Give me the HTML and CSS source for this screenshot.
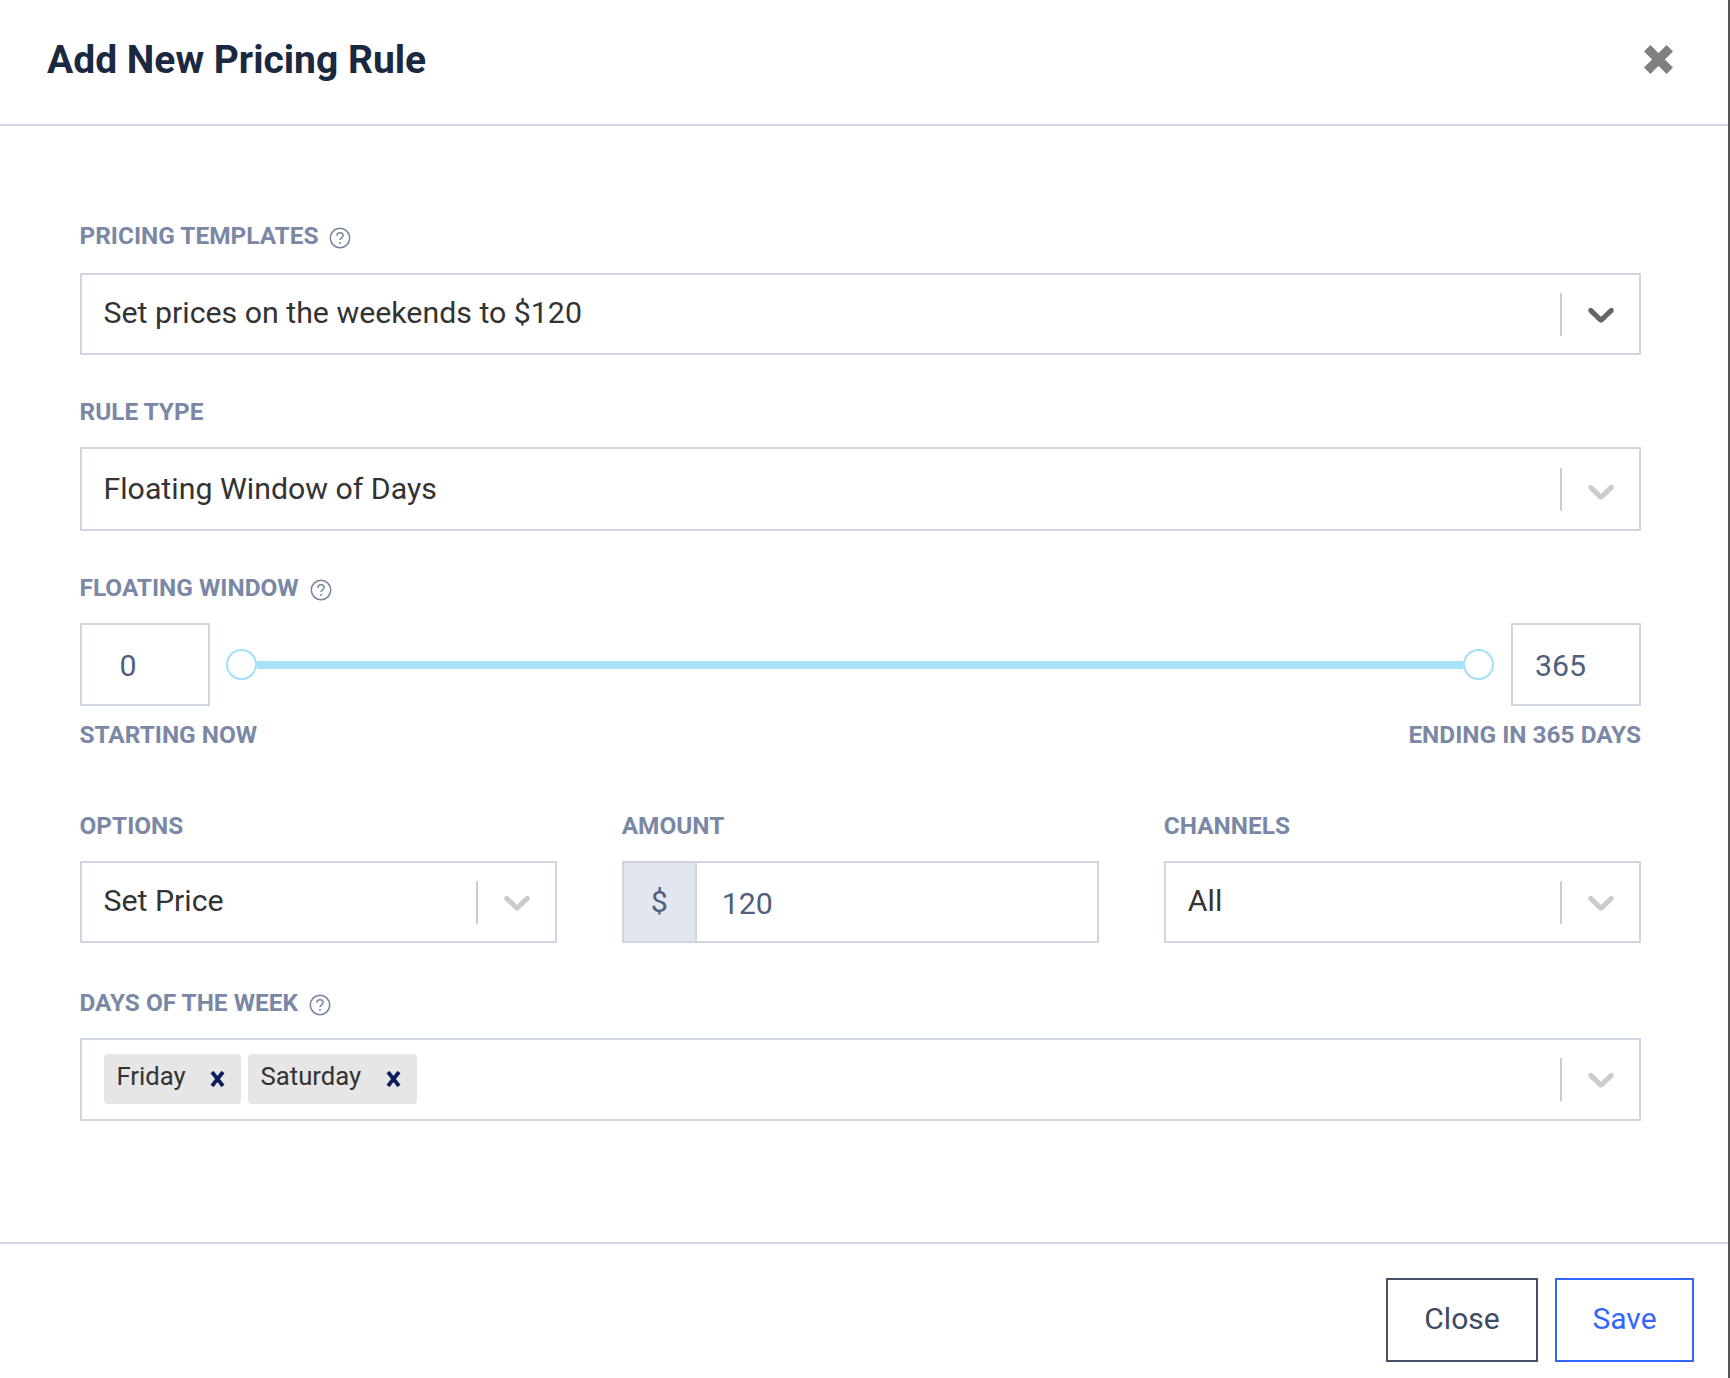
FILE: index.html
```html
<!DOCTYPE html>
<html>
<head>
    <title>Add New Pricing Rule</title>
    <link rel="stylesheet" href="styles.css">
</head>
<body>
    <svg class="defs" width="0" height="0">
        <symbol id="chevron" viewBox="0 0 20 20">
            <path d="M4.516 7.548c0.436-0.446 1.043-0.481 1.576 0l3.908 3.747 3.908-3.747c0.533-0.481 1.141-0.446 1.574 0 0.436 0.445 0.408 1.197 0 1.615-0.406 0.418-4.695 4.502-4.695 4.502-0.217 0.223-0.502 0.335-0.787 0.335s-0.57-0.112-0.789-0.335c0 0-4.287-4.084-4.695-4.502s-0.436-1.17 0-1.615z"/>
        </symbol>
        <symbol id="help" viewBox="0 0 22 22">
            <circle cx="11" cy="11" r="9.7" fill="none" stroke="currentColor" stroke-width="1.5"/>
            <path d="M7.9 8.7c0-1.8 1.3-3 3.1-3s3.1 1.1 3.1 2.7c0 2.4-3.1 2.5-3.1 4.7" fill="none" stroke="currentColor" stroke-width="1.5"/>
            <circle cx="11" cy="16" r="1" fill="currentColor"/>
        </symbol>
        <symbol id="remove" viewBox="0 0 15 16">
            <path d="M2 1l11 14M13 1l-11 14" fill="none" stroke="currentColor" stroke-width="3.8"/>
        </symbol>
    </svg>

    <div class="modal">
        <div class="modal-header">
            <h1 class="modal-title">Add New Pricing Rule</h1>
            <svg class="modal-close" viewBox="0 0 29 29">
                <path d="M3.2 3.2l22.6 22.6M25.8 3.2l-22.6 22.6" fill="none" stroke="#808080" stroke-width="9"/>
            </svg>
        </div>

        <div class="modal-body">
            <div class="field field-templates">
                <div class="label label-first">PRICING TEMPLATES <svg class="help"><use href="#help"/></svg></div>
                <div class="select">
                    <span class="select-value">Set prices on the weekends to $120</span>
                    <span class="select-divider"></span>
                    <svg class="chevron chevron-open"><use href="#chevron"/></svg>
                </div>
            </div>

            <div class="field field-type">
                <div class="label">RULE TYPE</div>
                <div class="select select-tall">
                    <span class="select-value">Floating Window of Days</span>
                    <span class="select-divider"></span>
                    <svg class="chevron"><use href="#chevron"/></svg>
                </div>
            </div>

            <div class="field field-window">
                <div class="label">FLOATING WINDOW <svg class="help"><use href="#help"/></svg></div>
                <div class="slider-row">
                    <div class="num-box num-start">0</div>
                    <div class="slider">
                        <span class="thumb"></span>
                        <span class="track"></span>
                        <span class="thumb"></span>
                    </div>
                    <div class="num-box num-end">365</div>
                </div>
                <div class="captions">
                    <span>STARTING NOW</span>
                    <span>ENDING IN 365 DAYS</span>
                </div>
            </div>

            <div class="columns">
                <div class="column">
                    <div class="label">OPTIONS</div>
                    <div class="select">
                        <span class="select-value">Set Price</span>
                        <span class="select-divider"></span>
                        <svg class="chevron"><use href="#chevron"/></svg>
                    </div>
                </div>
                <div class="column">
                    <div class="label">AMOUNT</div>
                    <div class="amount">
                        <span class="amount-addon">$</span>
                        <span class="amount-value">120</span>
                    </div>
                </div>
                <div class="column">
                    <div class="label">CHANNELS</div>
                    <div class="select">
                        <span class="select-value">All</span>
                        <span class="select-divider"></span>
                        <svg class="chevron"><use href="#chevron"/></svg>
                    </div>
                </div>
            </div>

            <div class="field">
                <div class="label">DAYS OF THE WEEK <svg class="help"><use href="#help"/></svg></div>
                <div class="select select-tags">
                    <div class="tags">
                        <span class="tag tag-friday">Friday <svg class="tag-x"><use href="#remove"/></svg></span>
                        <span class="tag tag-saturday">Saturday <svg class="tag-x"><use href="#remove"/></svg></span>
                    </div>
                    <span class="select-divider"></span>
                    <svg class="chevron"><use href="#chevron"/></svg>
                </div>
            </div>
        </div>

        <div class="modal-footer">
            <div class="btn btn-close">Close</div>
            <div class="btn btn-save">Save</div>
        </div>
    </div>
</body>
</html>
```

FILE: styles.css
```css
* {
    box-sizing: border-box;
}

html, body {
    margin: 0;
    height: 100%;
    background: #fff;
}

body {
    font-family: Roboto, "Liberation Sans", sans-serif;
    color: #333;
}

.defs {
    display: block;
    height: 0;
}

.modal {
    display: flex;
    flex-direction: column;
    height: 1378px;
    border-right: 2px solid #555;
}

/* header */
.modal-header {
    display: flex;
    justify-content: space-between;
    align-items: center;
    height: 126px;
    padding: 0 55px 5px 47px;
    border-bottom: 2px solid #d0d5e2;
}

.modal-title {
    margin: 0;
    font-size: 39px;
    font-weight: 700;
    color: #1a2840;
}

.modal-close {
    width: 29px;
    height: 29px;
}

/* body */
.modal-body {
    flex: 1;
    padding: 97px 87px 0 79.5px;
}

.field-templates {
    margin-bottom: 44px;
}

.field-type {
    margin-bottom: 44px;
}

.field-window {
    margin-bottom: 67px;
}

.label {
    display: flex;
    align-items: center;
    gap: 11px;
    height: 26px;
    padding-bottom: 2px;
    margin-bottom: 22px;
    font-size: 24.4px;
    font-weight: 700;
    color: #7a88a5;
}

.label-first {
    margin-bottom: 24px;
}

.help {
    width: 22px;
    height: 22px;
    margin-top: 6px;
    color: #7686a2;
}

/* selects */
.select {
    display: flex;
    align-items: center;
    height: 82px;
    padding: 0 21px 0 22px;
    border: 2px solid #d0d5e2;
    font-size: 30.3px;
}

.select-tall {
    height: 84px;
}

.select-tags {
    height: 83px;
}

.select-value {
    flex: 1;
    padding-bottom: 4px;
}

.select-tall .select-value {
    padding-bottom: 2px;
}

.select-divider {
    width: 2px;
    height: 43px;
    background: #ccc;
}

.chevron {
    width: 44px;
    height: 44px;
    margin-left: 17px;
    margin-right: -5px;
    fill: #ccc;
}

.chevron-open {
    fill: #666;
}

.select-tall .chevron {
    margin-top: 3px;
}

.select-tags .chevron {
    margin-top: -2px;
}

/* slider row */
.slider-row {
    display: flex;
    align-items: center;
}

.num-box {
    width: 130px;
    height: 83px;
    line-height: 81px;
    border: 2px solid #d0d5e2;
    font-size: 30.3px;
    color: #4f5f7d;
}

.num-start {
    padding-left: 38px;
}

.num-end {
    padding-left: 22px;
}

.slider {
    flex: 1;
    display: flex;
    align-items: center;
    padding: 0 17px 0 16px;
}

.thumb {
    flex: none;
    width: 31px;
    height: 31px;
    border: 2.5px solid #a3def8;
    border-radius: 50%;
    background: #fff;
}

.track {
    flex: 1;
    height: 8px;
    background: #a8e2f9;
}

.captions {
    display: flex;
    justify-content: space-between;
    margin-top: 14px;
    height: 26px;
    font-size: 24.4px;
    font-weight: 700;
    color: #7a88a5;
}

/* three columns */
.columns {
    display: grid;
    grid-template-columns: repeat(3, 1fr);
    gap: 65px;
    margin-bottom: 47px;
}

.amount {
    display: flex;
    height: 82px;
    border: 2px solid #d0d5e2;
    font-size: 30.3px;
    color: #4f5f7d;
}

.amount-addon {
    width: 73px;
    line-height: 78px;
    text-align: center;
    background: #e2e6ee;
    border-right: 2px solid #d0d5e2;
}

.amount-value {
    padding-left: 25px;
    line-height: 82px;
}

/* tags */
.tags {
    flex: 1;
    display: flex;
    gap: 7px;
    margin-top: -2px;
}

.tag {
    display: flex;
    justify-content: space-between;
    align-items: center;
    height: 50px;
    padding: 0 16px 5px 13px;
    border-radius: 4px;
    background: #e6e6e6;
    font-size: 25.7px;
    color: #333;
}

.tag-friday {
    width: 137px;
}

.tag-saturday {
    width: 169px;
}

.tag-x {
    width: 15px;
    height: 16px;
    margin-top: 6px;
    color: #0b1f56;
}

/* footer */
.modal-footer {
    display: flex;
    justify-content: flex-end;
    gap: 17px;
    height: 136px;
    padding: 34px 34px 0 0;
    border-top: 2px solid #d0d5e2;
}

.btn {
    height: 84px;
    line-height: 77px;
    text-align: center;
    border: 2px solid;
    font-size: 30px;
}

.btn-close {
    width: 152px;
    border-color: #44506a;
    color: #3d4a63;
}

.btn-save {
    width: 139px;
    border-color: #3366ff;
    color: #3366ff;
}
```
